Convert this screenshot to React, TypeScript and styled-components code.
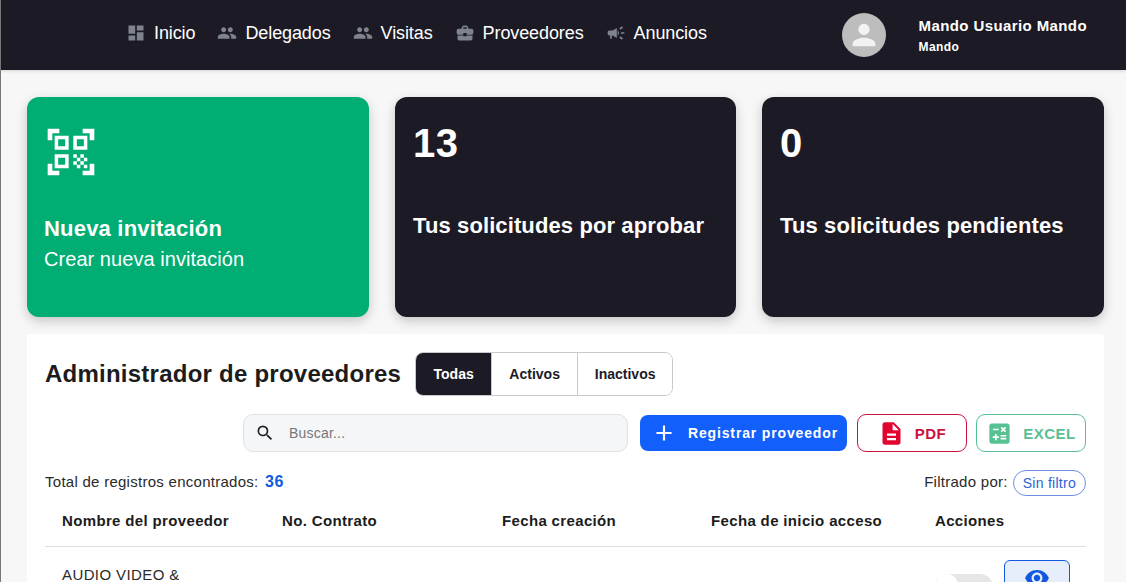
import { createGlobalStyle, styled } from 'styled-components';
import {
  MdAdd,
  MdBusinessCenter,
  MdCalculate,
  MdCampaign,
  MdDashboard,
  MdDescription,
  MdPeople,
  MdPerson,
  MdQrCodeScanner,
  MdSearch,
  MdVisibility,
} from 'react-icons/md';

const navItems = [
  { label: 'Inicio', Icon: MdDashboard },
  { label: 'Delegados', Icon: MdPeople },
  { label: 'Visitas', Icon: MdPeople },
  { label: 'Proveedores', Icon: MdBusinessCenter },
  { label: 'Anuncios', Icon: MdCampaign },
];

const columns = ['Nombre del proveedor', 'No. Contrato', 'Fecha creación', 'Fecha de inicio acceso', 'Acciones'];

const App = () => {
  return (
    <Page>
      <GlobalStyle />
      <Header>
        <Nav>
          {navItems.map(({ label, Icon }) => (
            <NavItem key={label}>
              <Icon size={20} color='#7f838c' />
              {label}
            </NavItem>
          ))}
        </Nav>
        <User>
          <Avatar>
            <MdPerson size={34} color='#f2f2f2' />
          </Avatar>
          <UserText>
            <UserName>Mando Usuario Mando</UserName>
            <UserRole>Mando</UserRole>
          </UserText>
        </User>
      </Header>

      <Cards>
        <GreenCard>
          <QrIcon size={56} />
          <InviteTitle>Nueva invitación</InviteTitle>
          <InviteText>Crear nueva invitación</InviteText>
        </GreenCard>
        <DarkCard>
          <Count>13</Count>
          <CardLabel>Tus solicitudes por aprobar</CardLabel>
        </DarkCard>
        <DarkCard>
          <Count>0</Count>
          <CardLabel>Tus solicitudes pendientes</CardLabel>
        </DarkCard>
      </Cards>

      <Panel>
        <TitleRow>
          <Title>Administrador de proveedores</Title>
          <Tabs>
            <Tab $active $width={75}>Todas</Tab>
            <Tab $width={86}>Activos</Tab>
            <Tab $width={95}>Inactivos</Tab>
          </Tabs>
        </TitleRow>

        <Toolbar>
          <Search>
            <MdSearch size={20} color='#222' />
            <SearchInput placeholder='Buscar...' />
          </Search>
          <PrimaryButton>
            <MdAdd size={26} />
            Registrar proveedor
          </PrimaryButton>
          <OutlineButton $color='#c9123f'>
            <MdDescription size={27} color='#e0062f' />
            PDF
          </OutlineButton>
          <OutlineButton $color='#57c193'>
            <MdCalculate size={27} color='#57c193' />
            EXCEL
          </OutlineButton>
        </Toolbar>

        <SummaryRow>
          <SummaryText>
            Total de registros encontrados: <Total>36</Total>
          </SummaryText>
          <FilterBox>
            <SummaryText>Filtrado por:</SummaryText>
            <FilterPill>Sin filtro</FilterPill>
          </FilterBox>
        </SummaryRow>

        <TableHead>
          {columns.map((c) => (
            <HeadCell key={c}>{c}</HeadCell>
          ))}
        </TableHead>

        <TableRow>
          <NameCell>AUDIO VIDEO &amp;</NameCell>
          <span />
          <span />
          <span />
          <ActionsCell>
            <Toggle />
            <EyeButton>
              <MdVisibility size={26} color='#1259e0' />
            </EyeButton>
          </ActionsCell>
        </TableRow>
      </Panel>
    </Page>
  );
};

const GlobalStyle = createGlobalStyle`
  html, body {
    margin: 0;
    height: 100%;
    overflow: hidden;
    background: #f7f7f7;
    font-family: "Liberation Sans", Arial, sans-serif;
  }
`;

const Page = styled.div`
  height: 582px;
  overflow: hidden;
  box-sizing: border-box;
  border-left: 1px solid #77777a;
  background: #f7f7f7;
`;

const Header = styled.header`
  height: 70px;
  background: #1c1b25;
  display: flex;
  align-items: center;
  justify-content: space-between;
  padding: 0 39px 0 125px;
  box-shadow: 0 1px 3px rgb(0 0 0 / 15%);
`;

const Nav = styled.nav`
  display: flex;
  align-items: center;
  gap: 22px;
  margin-bottom: 4px;
`;

const NavItem = styled.a`
  display: flex;
  align-items: center;
  gap: 8px;
  color: #fff;
  font-size: 18px;
  letter-spacing: -0.1px;
`;

const User = styled.div`
  display: flex;
  align-items: center;
  gap: 33px;
`;

const Avatar = styled.div`
  width: 44px;
  height: 44px;
  border-radius: 50%;
  background: #bdbdbd;
  display: flex;
  align-items: center;
  justify-content: center;
`;

const UserText = styled.div`
  display: flex;
  flex-direction: column;
  gap: 6px;
  color: #fff;
`;

const UserName = styled.div`
  font-size: 15px;
  font-weight: 700;
  letter-spacing: 0.4px;
`;

const UserRole = styled.div`
  font-size: 12px;
  font-weight: 700;
  letter-spacing: 0.4px;
`;

const Cards = styled.section`
  display: grid;
  grid-template-columns: 342px 341px 342px;
  gap: 26px;
  padding: 27px 0 0 26px;
`;

const Card = styled.div`
  height: 220px;
  box-sizing: border-box;
  border-radius: 12px;
  color: #fff;
  box-shadow: 0 4px 12px rgb(0 0 0 / 20%);
`;

const GreenCard = styled(Card)`
  background: #00ad72;
  padding: 27px 17px;
  display: flex;
  flex-direction: column;
  align-items: flex-start;
`;

const QrIcon = styled(MdQrCodeScanner)`
  color: #fff;
  margin-left: -1px;
`;

const DarkCard = styled(Card)`
  background: #1c1b25;
  padding: 23px 18px;
`;

const InviteTitle = styled.div`
  margin-top: 36px;
  font-size: 22px;
  font-weight: 700;
  letter-spacing: 0.2px;
`;

const InviteText = styled.div`
  margin-top: 6px;
  font-size: 20px;
  letter-spacing: 0.05px;
`;

const Count = styled.div`
  font-size: 40px;
  font-weight: 700;
  line-height: 46px;
  letter-spacing: 0.5px;
`;

const CardLabel = styled.div`
  margin-top: 47px;
  font-size: 22px;
  font-weight: 700;
  letter-spacing: 0.11px;
`;

const Panel = styled.section`
  margin: 17px 0 0 26px;
  width: 1077px;
  box-sizing: border-box;
  background: #fff;
  border-radius: 4px;
  padding: 18px 18px 0;
`;

const TitleRow = styled.div`
  display: flex;
  align-items: center;
  gap: 14px;
`;

const Title = styled.h2`
  margin: 0;
  font-size: 24px;
  font-weight: 700;
  color: #1c1c1c;
  letter-spacing: 0.24px;
`;

const Tabs = styled.div`
  display: flex;
  height: 44px;
  box-sizing: border-box;
  border: 1px solid #c9c9c9;
  border-radius: 8px;
  overflow: hidden;
`;

const Tab = styled.div<{ $active?: boolean; $width: number }>`
  width: ${(p) => p.$width}px;
  box-sizing: border-box;
  display: flex;
  align-items: center;
  justify-content: center;
  font-size: 14px;
  font-weight: 700;
  color: ${(p) => (p.$active ? '#fff' : '#1c1b25')};
  background: ${(p) => (p.$active ? '#1c1b25' : '#fff')};
  & + & {
    border-left: 1px solid #c9c9c9;
  }
`;

const Toolbar = styled.div`
  display: flex;
  justify-content: flex-end;
  align-items: center;
  gap: 10px;
  margin-top: 18px;
`;

const Search = styled.div`
  width: 385px;
  height: 38px;
  box-sizing: border-box;
  display: flex;
  align-items: center;
  gap: 12px;
  padding: 0 11px;
  margin-right: 2px;
  background: #f5f6f8;
  border: 1px solid #dfe1e5;
  border-radius: 10px;
`;

const SearchInput = styled.input`
  flex: 1;
  border: none;
  outline: none;
  background: transparent;
  font: 14px "Liberation Sans", Arial, sans-serif;
  letter-spacing: 0.2px;
  &::placeholder {
    color: #777;
  }
`;

const PrimaryButton = styled.button`
  width: 207px;
  height: 36px;
  display: flex;
  align-items: center;
  gap: 11px;
  border: none;
  border-radius: 8px;
  background: #135ffb;
  color: #fff;
  font: 700 14px "Liberation Sans", Arial, sans-serif;
  letter-spacing: 0.85px;
  padding: 0 0 0 11px;
`;

const OutlineButton = styled.button<{ $color: string }>`
  width: 110px;
  height: 38px;
  display: flex;
  align-items: center;
  justify-content: center;
  gap: 10px;
  background: #fff;
  border: 1px solid ${(p) => p.$color};
  border-radius: 9px;
  color: ${(p) => p.$color};
  font: 700 15px "Liberation Sans", Arial, sans-serif;
  letter-spacing: 0.5px;
  padding: 0;
  & + & {
    margin-left: -1px;
  }
`;

const SummaryRow = styled.div`
  display: flex;
  justify-content: space-between;
  align-items: center;
  margin-top: 18px;
  font-size: 15px;
  color: #2a2a2a;
  letter-spacing: 0.27px;
`;

const SummaryText = styled.span`
  margin-bottom: 3px;
`;

const Total = styled.b`
  color: #1259e0;
  font-size: 16px;
  letter-spacing: 0.8px;
  margin-left: 2px;
`;

const FilterBox = styled.div`
  display: flex;
  align-items: center;
  gap: 5px;
`;

const FilterPill = styled.span`
  height: 26px;
  box-sizing: border-box;
  display: flex;
  align-items: center;
  padding: 0 9px;
  border: 1px solid #6f8fe0;
  border-radius: 13px;
  color: #2d62d6;
  font-size: 14px;
`;

const tableColumns = '220px 220px 209px 224px 1fr';

const TableHead = styled.div`
  display: grid;
  grid-template-columns: ${tableColumns};
  align-items: center;
  height: 50px;
  box-sizing: content-box;
  padding: 0 17px;
  border-bottom: 1px solid #dedede;
`;

const HeadCell = styled.div`
  font-size: 15px;
  font-weight: 700;
  color: #1c1c1c;
  letter-spacing: 0.35px;
  margin-bottom: 2px;
`;

const TableRow = styled.div`
  display: grid;
  grid-template-columns: ${tableColumns};
  padding: 13px 17px 0;
`;

const NameCell = styled.div`
  font-size: 15px;
  line-height: 14px;
  color: #2a2a2a;
  letter-spacing: 0.4px;
  padding-top: 8px;
`;

const ActionsCell = styled.div`
  display: flex;
  align-items: flex-start;
  gap: 11px;
`;

const Toggle = styled.div`
  width: 58px;
  height: 26px;
  margin-top: 14px;
  border-radius: 13px;
  background: #e6e6e6;
  position: relative;
  &::before {
    content: '';
    position: absolute;
    left: 1px;
    top: 0;
    width: 22px;
    height: 22px;
    border-radius: 50%;
    background: #fff;
  }
`;

const EyeButton = styled.button`
  width: 66px;
  height: 44px;
  box-sizing: border-box;
  border: 1px solid #1259e0;
  border-radius: 6px;
  background: #e6eefc;
  display: flex;
  justify-content: center;
  padding: 4px 0 0;
`;

export default App;
